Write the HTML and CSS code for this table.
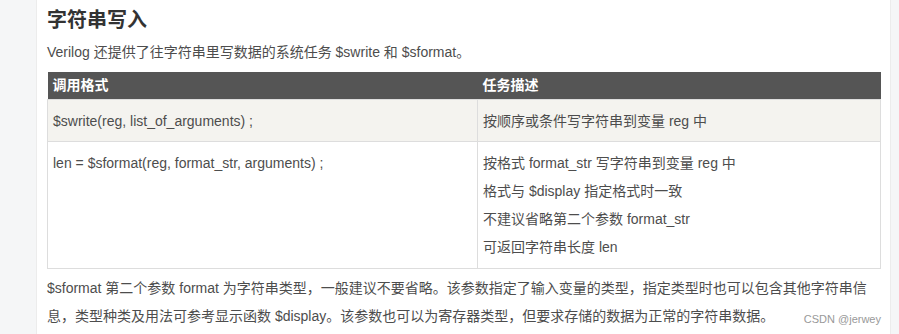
FILE: index.html
```html
<!DOCTYPE html>
<html lang="zh-CN">
<head>
    <meta charset="UTF-8">
    <title>字符串写入</title>
    <link rel="stylesheet" href="styles.css">
</head>

<body>
    <div id="page">
        <div class="side-left"></div>
        <div id="article">
            <h3 class="title">字符串写入</h3>
            <p class="text">Verilog 还提供了往字符串里写数据的系统任务 $swrite 和 $sformat。</p>
            <table class="task-table">
                <thead>
                    <tr>
                        <th class="col-usage">调用格式</th>
                        <th>任务描述</th>
                    </tr>
                </thead>
                <tbody>
                    <tr class="odd">
                        <td>$swrite(reg, list_of_arguments) ;</td>
                        <td>按顺序或条件写字符串到变量 reg 中</td>
                    </tr>
                    <tr>
                        <td>len = $sformat(reg, format_str, arguments) ;</td>
                        <td>
                            按格式 format_str 写字符串到变量 reg 中<br>
                            格式与 $display 指定格式时一致<br>
                            不建议省略第二个参数 format_str<br>
                            可返回字符串长度 len
                        </td>
                    </tr>
                </tbody>
            </table>
            <p class="text after">$sformat 第二个参数 format 为字符串类型，一般建议不要省略。该参数指定了输入变量的类型，指定类型时也可以包含其他字符串信息，类型种类及用法可参考显示函数 $display。该参数也可以为寄存器类型，但要求存储的数据为正常的字符串数据。<span class="watermark">CSDN @jerwey</span></p>
        </div>
        <div class="side-right"></div>
    </div>
</body>
</html>
```

FILE: styles.css
```css
body{
    margin: 0;
    background: #fff;
    font-family: "Liberation Sans", Arial, "Noto Sans CJK SC", sans-serif;
    color: #4d4d4d;
}
#page{
    display: flex;
    height: 334px;
    overflow: hidden;
    .side-left{
        width: 36px;
        flex: none;
        background: #f5f6f7;
        border-right: 1px solid #ececec;
    }
    .side-right{
        width: 8px;
        flex: none;
        background: #f5f6f7;
        border-left: 1px solid #ececec;
    }
}
#article{
    flex: 1;
    padding: 0 9px 0 10px;
    .title{
        margin: 6px 0 0;
        font-size: 20px;
        line-height: 28px;
        font-weight: bold;
        color: #333;
    }
    .text{
        margin: 4px 0 6px;
        font-size: 14px;
        line-height: 28px;
    }
    .after{
        margin-top: 5px;
    }
}
.task-table{
    width: 100%;
    border-collapse: collapse;
    font-size: 14px;
    line-height: 28px;
    th{
        background: #555;
        color: #fff;
        text-align: left;
        font-weight: bold;
        padding: 0 5px;
        height: 27px;
        line-height: 27px;
        border: none;
    }
    .col-usage{
        width: 420px;
    }
    td{
        border: 1px solid #ddd;
        padding: 7px 5px;
        vertical-align: top;
    }
    .odd td{
        background: #f4f3ef;
        padding-bottom: 6px;
    }
}
/* author mark sits at the end of the last line */
.watermark{
    float: right;
    margin-top: 3px;
    font-size: 11px;
    line-height: 28px;
    color: #999;
}
```
